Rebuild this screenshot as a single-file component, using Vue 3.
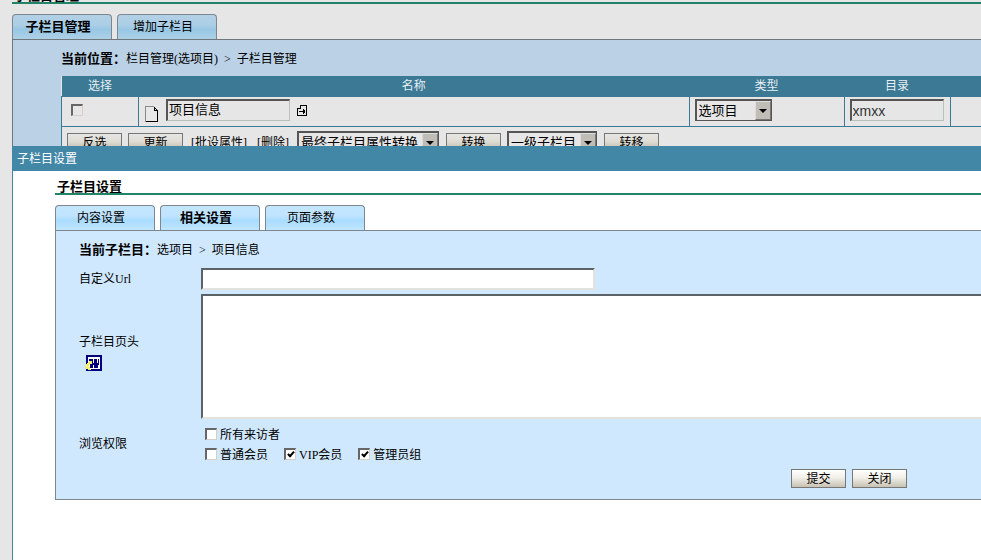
<script setup>
import { ref } from 'vue'

const mainTabs = ['子栏目管理', '增加子栏目']
const dialogTabs = ['内容设置', '相关设置', '页面参数']
const activeMain = ref(0)
const activeDialog = ref(1)
const name = ref('项目信息')
const folder = ref('xmxx')
const url = ref('')
const header = ref('')
const groups = ref([
  { label: '普通会员', checked: false },
  { label: 'VIP会员', checked: true },
  { label: '管理员组', checked: true },
])
const everyone = ref(false)
const picked = ref(false)
</script>

<template>
  <div class="page">
    <main class="backdrop">
      <h1 class="title main-title">子栏目管理</h1>
      <nav class="tabs">
        <button v-for="(t, i) in mainTabs" :key="t" type="button" class="tab dim" :class="{ active: i === activeMain }" @click="activeMain = i">{{ t }}</button>
      </nav>
      <section class="main-panel">
        <p class="crumbs"><b>当前位置：</b>栏目管理(选项目)<span class="sep">&gt;</span>子栏目管理</p>
        <table class="list">
          <colgroup>
            <col class="c-pick"><col class="c-name"><col class="c-type"><col class="c-dir"><col class="c-rest">
          </colgroup>
          <thead>
            <tr><th>选择</th><th>名称</th><th>类型</th><th>目录</th><th></th></tr>
          </thead>
          <tbody>
            <tr>
              <td><input v-model="picked" type="checkbox" class="check dim" aria-label="选择"></td>
              <td>
                <div class="name-cell">
                  <svg class="doc" width="14" height="17" viewBox="0 0 14 17" shape-rendering="crispEdges">
                    <path d="M1 16V1H9L13 5V16Z" fill="#e8e8e8" />
                    <path d="M.5 16V.5H9" fill="none" stroke="#888" />
                    <path d="M9 1L12.500 4.500V15.500H1M9.500 1V4.500H12" fill="none" stroke="#000" />
                  </svg>
                  <input v-model="name" class="field dim name-field" aria-label="名称">
                  <svg class="go" width="11" height="12" viewBox="0 0 11 12" shape-rendering="crispEdges">
                    <path d="M3.500 3.500V.5H9.500V10.500H.5V3.500H3.500M2 6.500H8M6.500 4V9M7.500 5V8" fill="none" stroke="#000" />
                  </svg>
                </div>
              </td>
              <td>
                <span class="select type-select"><select aria-label="类型"><option>选项目</option></select><i class="arrow"></i></span>
              </td>
              <td><input v-model="folder" class="field dim dir-field" aria-label="目录"></td>
              <td></td>
            </tr>
          </tbody>
        </table>
        <div class="actions">
          <button type="button" class="btn dim">反选</button>
          <button type="button" class="btn dim">更新</button>
          <a href="#">[批设属性]</a>
          <a href="#">[删除]</a>
          <span class="select convert-select"><select aria-label="属性转换"><option>最终子栏目属性转换</option></select><i class="arrow"></i></span>
          <button type="button" class="btn dim">转换</button>
          <span class="select move-select"><select aria-label="转移到"><option>一级子栏目</option></select><i class="arrow"></i></span>
          <button type="button" class="btn dim">转移</button>
        </div>
      </section>
    </main>

    <section class="dialog" role="dialog" aria-labelledby="dialog-name">
      <header id="dialog-name" class="dialog-bar">子栏目设置</header>
      <div class="dialog-body">
        <h2 class="title">子栏目设置</h2>
        <nav class="tabs dialog-tabs">
          <button v-for="(t, i) in dialogTabs" :key="t" type="button" class="tab" :class="{ active: i === activeDialog }" @click="activeDialog = i">{{ t }}</button>
        </nav>
        <form class="form" @submit.prevent>
          <p class="form-crumbs"><b>当前子栏目：</b>选项目<span class="sep">&gt;</span>项目信息</p>
          <label for="url">自定义Url</label>
          <input id="url" v-model="url" class="field url-field">
          <div class="head-label">
            <label for="head">子栏目页头</label>
            <svg class="word" width="17" height="17" viewBox="0 0 17 17" shape-rendering="crispEdges">
              <path d="M1 0H17V16H1Z" fill="#00007c" />
              <path d="M3 2H15V14H3Z" fill="#fff" />
              <path d="M4 4H8V8H9V4H12V8H13V4H14V8L13 13H9V10H8V13H5Z" fill="#00007c" />
              <path d="M4 6H7V9H5V10H4V12H5V14H6V15H3V14H1V13H0V11H1V9H2V8H3V7H4Z" fill="#f4f06a" />
            </svg>
          </div>
          <textarea id="head" v-model="header" class="field area"></textarea>
          <span>浏览权限</span>
          <div class="rights">
            <div class="right-row">
              <label><input v-model="everyone" type="checkbox" class="check">所有来访者</label>
            </div>
            <div class="right-row">
              <label v-for="g in groups" :key="g.label"><input v-model="g.checked" type="checkbox" class="check">{{ g.label }}</label>
            </div>
          </div>
          <div class="buttons">
            <button type="submit" class="btn">提交</button>
            <button type="button" class="btn">关闭</button>
          </div>
        </form>
      </div>
    </section>
  </div>
</template>

<style>
body {
  margin: 0;
  background: #e6e6e6;
}
</style>

<style scoped>
.page {
  position: relative;
  min-height: 100vh;
  overflow: hidden;
  color: #000;
  font: 12px/16px "Liberation Serif", "Noto Sans CJK SC", serif;
}
.page *,
.page *::before {
  box-sizing: border-box;
}
button,
input,
select,
textarea {
  margin: 0;
  color: inherit;
  font: inherit;
}
.backdrop {
  padding-left: 12px;
}
.title {
  margin: 0;
  padding-left: 2px;
  border-bottom: 2px solid #218468;
  font-size: 13px;
  line-height: 12px;
}
.main-title {
  margin-top: -10px;
}
.tabs {
  display: flex;
  gap: 5px;
  margin-top: 10px;
}
.tab {
  width: 100px;
  height: 25px;
  padding: 0 8px 0 0;
  border: 1px solid #7d878d;
  border-bottom: 0;
  border-radius: 4px 4px 0 0;
  background: linear-gradient(#c4e6ff, #c0e4ff 40%, #a9dcff 60%, #bfe6ff);
}
.tab.dim {
  background: linear-gradient(#b2d0e6, #accfe6 40%, #98c7e5 60%, #acd0e6);
}
.tab.active {
  font-size: 13px;
  font-weight: bold;
}
.main-panel {
  padding: 11px 0 0 48px;
  border: 1px solid #70777c;
  border-width: 1px 0 0 1px;
  background: #bbd1e5;
}
.crumbs {
  margin: 0 0 9px;
}
.crumbs b,
.form-crumbs b {
  font-size: 13px;
}
.sep {
  padding: 0 6px;
}
.list {
  width: 100%;
  border-collapse: collapse;
  table-layout: fixed;
  background: #e6e6e6;
}
.c-pick { width: 77px; }
.c-type { width: 155px; }
.c-dir { width: 106px; }
.c-rest { width: 31px; }
.list th {
  height: 20px;
  padding: 0;
  background: #3b7995;
  color: #e6eef2;
  font-weight: normal;
}
.list td {
  height: 30px;
  padding: 0 5px 2px;
  border: 1px solid #3b7995;
  border-right: 0;
}
.list td:first-child {
  padding-left: 9px;
}
.name-cell {
  display: flex;
  align-items: center;
  gap: 7px;
  padding-left: 1px;
}
.doc {
  align-self: flex-end;
  margin-bottom: -2px;
}
.go {
  margin-top: 2px;
}
.field {
  display: block;
  height: 22px;
  padding: 0 1px 2px;
  border: 2px solid;
  border-color: #5c6368 #e2e2de #e2e2de #5c6368;
  border-radius: 0;
  outline: 0;
  background: #fff;
}
.field.dim {
  background: #e6e6e6;
  border-color: #555 #b8c0bc #b8c0bc #555;
  border-width: 2px 1px 1px 2px;
}
.name-field {
  width: 124px;
  padding-bottom: 4px;
  font-size: 13px;
}
.dir-field {
  width: 94px;
  padding-bottom: 0;
  color: #333;
  font: 14px "Liberation Sans", sans-serif;
}
.select {
  display: flex;
  height: 22px;
  border: 2px solid;
  border-width: 2px 1px 1px 2px;
  border-color: #555;
  background: #e6e6e6;
}
.select select {
  flex: 1;
  min-width: 0;
  padding: 0 2px;
  border: 0;
  appearance: none;
  background: transparent;
  font-size: 13px;
}
.arrow {
  display: grid;
  place-items: center;
  width: 16px;
  border: 1px solid;
  border-color: #ddd #777 #777 #ddd;
  background: #bfbdb6;
  pointer-events: none;
}
.arrow::before {
  content: "";
  border: 4px solid transparent;
  border-top-color: #000;
  border-bottom: 0;
}
.type-select { width: 77px; }
.convert-select { width: 142px; }
.move-select { width: 90px; }
.actions {
  display: flex;
  align-items: center;
  gap: 6px;
  height: 30px;
  padding: 2px 6px 0 5px;
  border-left: 1px solid #3b7995;
  background: #e6e6e6;
}
.actions a {
  padding: 0 2px;
  color: inherit;
  text-decoration: none;
}
.actions .select {
  height: 24px;
  margin-right: 1px;
}
.btn {
  width: 55px;
  height: 19px;
  padding: 1px 0 0;
  border: 1px solid #777;
  background: linear-gradient(#fff, #f1efe8 45%, #c8c2b4);
  line-height: 16px;
}
.btn.dim {
  background: linear-gradient(#e6e6e6, #dedcd3 45%, #b8b2a5);
}
.check {
  flex: none;
  display: grid;
  place-items: center;
  width: 12px;
  height: 12px;
  border: 2px solid;
  border-width: 2px 1px 1px 2px;
  border-color: #666 #d4d0c8 #d4d0c8 #666;
  appearance: none;
  background: #fff;
}
.check.dim {
  background: #e6e6e6;
}
.check:checked::before {
  content: "";
  width: 4px;
  height: 7px;
  margin-top: -2px;
  border: solid #000;
  border-width: 0 2px 2px 0;
  transform: rotate(42deg);
}
.dialog {
  position: absolute;
  inset: 146px 0 0 12px;
  border-left: 1px solid #4387a7;
  background: #fff;
}
.dialog-bar {
  height: 25px;
  padding: 5px 4px 4px;
  background: #4387a7;
  color: #fff;
}
.dialog-body {
  padding: 10px 0 0 42px;
}
.form {
  display: grid;
  grid-template-columns: 122px 1fr;
  align-items: center;
  row-gap: 4px;
  padding: 11px 0 11px 23px;
  border: 1px solid #7d878d;
  border-right: 0;
  background: #d0e8fe;
}
.form-crumbs {
  grid-column: 1 / -1;
  margin: 0 0 6px;
}
.url-field {
  width: 394px;
}
.area {
  width: 100%;
  height: 125px;
  border-right: 0;
  resize: none;
}
.head-label {
  display: grid;
  gap: 5px;
  padding-bottom: 8px;
}
.word {
  margin-left: 6px;
}
.rights {
  padding: 2px 0 0 4px;
}
.right-row {
  display: flex;
  gap: 16px;
}
.right-row label {
  display: flex;
  align-items: center;
  gap: 3px;
  height: 20px;
}
.right-row .check {
  margin-bottom: 3px;
}
.buttons {
  display: flex;
  grid-column: 1 / -1;
  justify-content: flex-end;
  gap: 6px;
  padding-right: 74px;
}
</style>
